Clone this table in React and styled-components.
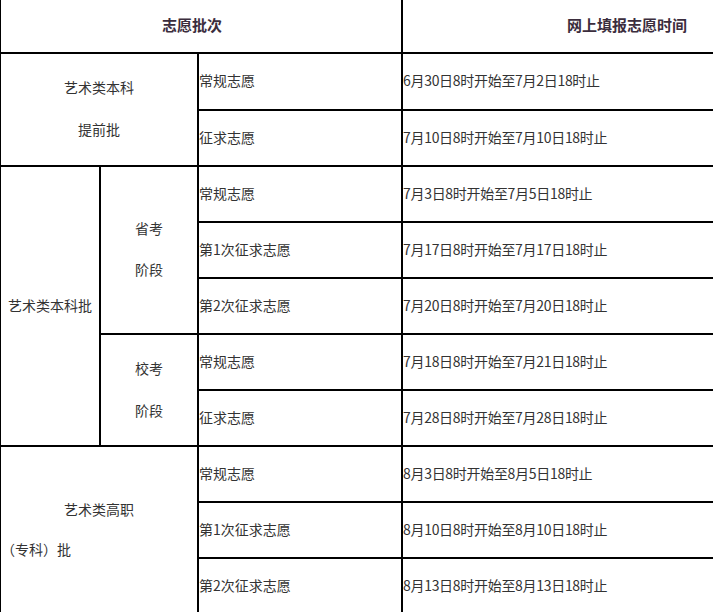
import React from 'react';
import styled, { createGlobalStyle } from 'styled-components';

const GlobalStyle = createGlobalStyle`
  html, body {
    margin: 0;
    padding: 0;
    background: #fff;
    overflow: hidden;
  }
  body {
    font-family: "Noto Sans CJK SC", "Noto Sans", sans-serif;
    font-size: 14px;
    color: #333;
  }
`;

const Grid = styled.div`
  display: grid;
  grid-template-columns: 100px 98px 204px 450px;
  grid-template-rows: 54px 57px repeat(9, 56px);
  width: 853px;
  border-left: 1px solid #000;
`;

const Cell = styled.div`
  box-sizing: border-box;
  grid-column: ${p => p.$col};
  grid-row: ${p => p.$row};
  border-right: 2px solid #000;
  border-bottom: 2px solid #000;
  display: flex;
  flex-direction: column;
  justify-content: center;
  align-items: ${p => (p.$center ? 'center' : 'flex-start')};
  white-space: nowrap;
  line-height: 20px;
  padding-bottom: 3px;
  letter-spacing: ${p => p.$tight || 0}px;
`;

const HeadCell = styled(Cell)`
  align-items: center;
  font-size: 15px;
  font-weight: bold;
  color: #3b2d3d;
  padding-right: ${p => p.$shift || 0}px;
  padding-bottom: 2px;
`;

const Line = styled.span`
  display: block;
  line-height: ${p => p.$lh || 42}px;
  align-self: ${p => (p.$left ? 'flex-start' : 'center')};
`;

const dates = [
  '6月30日8时开始至7月2日18时止',
  '7月10日8时开始至7月10日18时止',
  '7月3日8时开始至7月5日18时止',
  '7月17日8时开始至7月17日18时止',
  '7月20日8时开始至7月20日18时止',
  '7月18日8时开始至7月21日18时止',
  '7月28日8时开始至7月28日18时止',
  '8月3日8时开始至8月5日18时止',
  '8月10日8时开始至8月10日18时止',
  '8月13日8时开始至8月13日18时止',
];

const kinds = [
  '常规志愿',
  '征求志愿',
  '常规志愿',
  '第1次征求志愿',
  '第2次征求志愿',
  '常规志愿',
  '征求志愿',
  '常规志愿',
  '第1次征求志愿',
  '第2次征求志愿',
];

export default function App() {
  return (
    <>
      <GlobalStyle />
      <Grid>
        <HeadCell $col="1 / 4" $row="1" $shift={18}>志愿批次</HeadCell>
        <HeadCell $col="4" $row="1">网上填报志愿时间</HeadCell>

        <Cell $col="1 / 3" $row="2 / 4" $center>
          <Line>艺术类本科</Line>
          <Line>提前批</Line>
        </Cell>

        <Cell $col="1" $row="4 / 9" $center>
          <Line>艺术类本科批</Line>
        </Cell>
        <Cell $col="2" $row="4 / 7" $center>
          <Line $lh={41}>省考</Line>
          <Line $lh={41}>阶段</Line>
        </Cell>
        <Cell $col="2" $row="7 / 9" $center>
          <Line>校考</Line>
          <Line>阶段</Line>
        </Cell>

        <Cell $col="1 / 3" $row="9 / 12" $center>
          <Line $lh={40}>艺术类高职</Line>
          <Line $lh={40} $left>（专科）批</Line>
        </Cell>

        {kinds.map((k, i) => (
          <Cell key={'k' + i} $col="3" $row={String(i + 2)}>
            {k}
          </Cell>
        ))}
        {dates.map((d, i) => (
          <Cell key={'d' + i} $col="4" $row={String(i + 2)} $tight={-0.3}>
            {d}
          </Cell>
        ))}
      </Grid>
    </>
  );
}
